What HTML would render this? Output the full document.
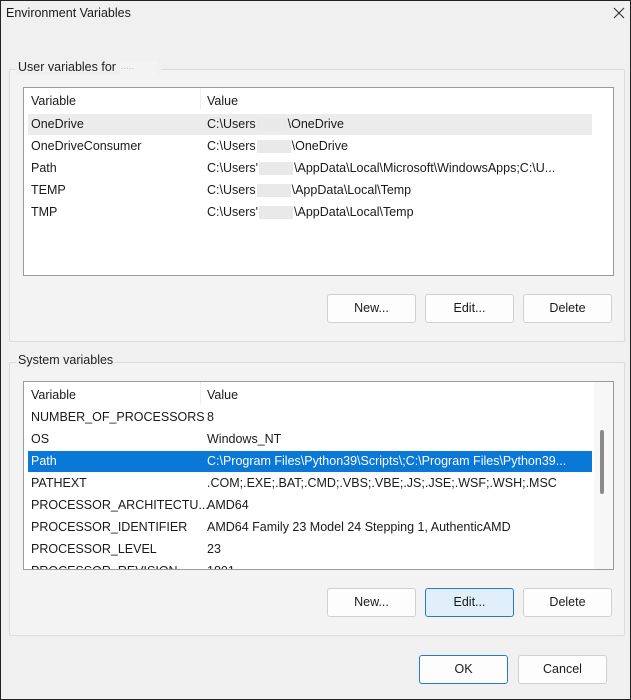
<!DOCTYPE html>
<html><head><meta charset="utf-8"><style>
*{margin:0;padding:0;box-sizing:border-box}
body{width:631px;height:700px;background:#f0f0f0;font-family:"Liberation Sans",sans-serif;font-size:12.5px;color:#1a1a1a;position:relative;overflow:hidden;border:1px solid #222}
.a{position:absolute;white-space:nowrap}
.grp{position:absolute;border:1px solid #dcdcdc;background:#f3f3f3;border-radius:2px}
.lbl{position:absolute;background:#f0f0f0;padding:0 2px;color:#222;font-size:12.5px}
.list{position:absolute;background:#fff;border:1px solid #9a9a9a;overflow:hidden}
.row{position:absolute;left:4px;height:21px;line-height:21px;width:564px}
.row span{position:absolute;left:3px}
.row span+span{left:179px}
.btn{position:absolute;height:29px;background:#fdfdfd;border:1px solid #d0d0d0;border-radius:3px;text-align:center;line-height:27px;color:#1a1a1a}
.blur{display:inline-block;width:34px;height:13px;background:#e9e9e9;vertical-align:middle;margin:0 1px}
</style></head><body>
<div class="a" style="left:5px;top:5px;font-size:12.5px">Environment Variables</div>
<svg class="a" style="left:612px;top:6px" width="12" height="12"><path d="M1 1L11 11M11 1L1 11" stroke="#333" stroke-width="1.1"/></svg>

<div class="grp" style="left:8px;top:68px;width:616px;height:273px"></div>
<div class="lbl" style="left:15px;top:59px">User variables for <span class="blur" style="width:38px;background:#f3f3f3;color:#bbb;font-size:10px">.....</span></div>
<div class="list" style="left:22px;top:86px;width:591px;height:189px">
<div class="a" style="left:176px;top:0;width:1px;height:22px;background:#eee"></div>
<div class="row" style="top:3px"><span>Variable</span><span>Value</span></div>
<div class="row" style="top:26px;background:#ececec"><span>OneDrive</span><span>C:\Users<span class="blur" style="position:static;width:30px"></span>\OneDrive</span></div>
<div class="row" style="top:48px"><span>OneDriveConsumer</span><span>C:\Users<span class="blur" style="position:static"></span>\OneDrive</span></div>
<div class="row" style="top:70px"><span>Path</span><span>C:\Users'<span class="blur" style="position:static"></span>\AppData\Local\Microsoft\WindowsApps;C:\U...</span></div>
<div class="row" style="top:92px"><span>TEMP</span><span>C:\Users<span class="blur" style="position:static"></span>\AppData\Local\Temp</span></div>
<div class="row" style="top:114px"><span>TMP</span><span>C:\Users'<span class="blur" style="position:static"></span>\AppData\Local\Temp</span></div>
</div>
<div class="btn" style="left:326px;top:293px;width:89px">New...</div>
<div class="btn" style="left:424px;top:293px;width:89px">Edit...</div>
<div class="btn" style="left:522px;top:293px;width:89px">Delete</div>

<div class="grp" style="left:8px;top:361px;width:616px;height:274px"></div>
<div class="lbl" style="left:15px;top:352px">System variables</div>
<div class="list" style="left:22px;top:380px;width:591px;height:189px">
<div class="a" style="left:176px;top:0;width:1px;height:22px;background:#eee"></div>
<div class="a" style="left:570px;top:0;width:20px;height:189px;background:#f7f7f7"></div>
<div class="a" style="left:576px;top:48px;width:4px;height:64px;background:#8a8a8a;border-radius:2px"></div>
<div class="row" style="top:3px"><span>Variable</span><span>Value</span></div>
<div class="row" style="top:25px"><span>NUMBER_OF_PROCESSORS</span><span>8</span></div>
<div class="row" style="top:47px"><span>OS</span><span>Windows_NT</span></div>
<div class="row" style="top:69px;background:#0a78d7;color:#fff"><span>Path</span><span>C:\Program Files\Python39\Scripts\;C:\Program Files\Python39...</span></div>
<div class="row" style="top:91px"><span>PATHEXT</span><span>.COM;.EXE;.BAT;.CMD;.VBS;.VBE;.JS;.JSE;.WSF;.WSH;.MSC</span></div>
<div class="row" style="top:113px"><span>PROCESSOR_ARCHITECTU...</span><span>AMD64</span></div>
<div class="row" style="top:135px"><span>PROCESSOR_IDENTIFIER</span><span>AMD64 Family 23 Model 24 Stepping 1, AuthenticAMD</span></div>
<div class="row" style="top:157px"><span>PROCESSOR_LEVEL</span><span>23</span></div>
<div class="row" style="top:179px"><span>PROCESSOR_REVISION</span><span>1801</span></div>
</div>
<div class="btn" style="left:326px;top:587px;width:89px">New...</div>
<div class="btn" style="left:424px;top:587px;width:89px;background:#e0eef9;border-color:#2b7bc4">Edit...</div>
<div class="btn" style="left:522px;top:587px;width:89px">Delete</div>

<div class="btn" style="left:418px;top:654px;width:89px;border-color:#2b7bc4">OK</div>
<div class="btn" style="left:517px;top:654px;width:89px">Cancel</div>
</body></html>
